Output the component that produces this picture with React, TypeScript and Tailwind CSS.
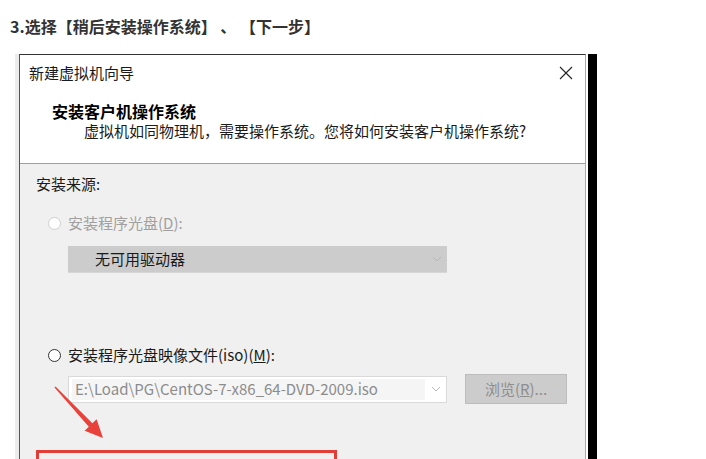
import React from 'react';

const font = { fontFamily: '"Noto Sans CJK SC", "Noto Sans", sans-serif' };

const Chevron = () => (
  <svg width="10" height="6" viewBox="0 0 10 6" className="shrink-0">
    <path d="M1 1 L5 5 L9 1" fill="none" stroke="#b8b8b8" strokeWidth="1" />
  </svg>
);

const Radio = ({ disabled }: { disabled?: boolean }) => (
  <span
    className={
      'w-[13px] h-[13px] rounded-full border bg-white shrink-0 ' +
      (disabled ? 'border-[#cfcfcf]' : 'border-[#333333]')
    }
  />
);

export default function App() {
  return (
    <div className="w-[706px] h-[459px] overflow-hidden bg-white relative" style={font}>
      <h2 className="pt-[15px] pl-[10px] text-[16px] leading-[22px] font-bold text-[#333333] whitespace-pre">
        3.选择【稍后安装操作系统】 、 【下一步】
      </h2>

      <div className="flex mt-[17px] ml-[15px]">
        <div className="w-[4px] bg-[#ececec]" />
        {/* dialog */}
        <div className="w-[567px] h-[420px] border-l border-t border-r border-l-[#555555] border-t-[#333333] border-r-[#a8a8a8]">
          <div className="bg-white border-b border-[#a0a0a0]">
            <div className="h-[36px] flex items-center justify-between pl-[9px] pr-[12px]">
              <span className="text-[15px] text-[#1a1a1a]">新建虚拟机向导</span>
              <svg width="14" height="14" viewBox="0 0 14 14">
                <path d="M1 1 L13 13 M13 1 L1 13" stroke="#222222" strokeWidth="1.1" />
              </svg>
            </div>
            <div className="mt-[10px] pl-[32px] text-[16px] leading-[20px] font-bold text-black">
              安装客户机操作系统
            </div>
            <div className="pl-[64px] pb-[22px] text-[15px] leading-[20px] text-[#1a1a1a]">
              虚拟机如同物理机，需要操作系统。您将如何安装客户机操作系统?
            </div>
          </div>

          <div className="bg-[#f0f0f0] h-full pl-[16px]">
            <div className="pt-[10px] text-[15px] leading-[20px] text-[#1a1a1a]">安装来源:</div>

            <div className="mt-[19px] ml-[12px] flex items-center gap-[7px] h-[20px]">
              <Radio disabled />
              <span className="text-[15px] text-[#a0a0a0]">
                安装程序光盘(<span className="underline">D</span>):
              </span>
            </div>

            <div className="mt-[13px] ml-[32px] w-[379px] h-[27px] bg-[#cccccc] border-b border-[#d6d6d6] flex items-center justify-between pl-[27px] pr-[5px]">
              <span className="text-[15px] text-[#1a1a1a]">无可用驱动器</span>
              <Chevron />
            </div>

            <div className="mt-[72px] ml-[12px] flex items-center gap-[7px] h-[20px]">
              <Radio />
              <span className="text-[15px] text-[#1a1a1a]">
                安装程序光盘映像文件(iso)(<span className="underline">M</span>):
              </span>
            </div>

            <div className="mt-[9px] ml-[32px] flex items-center gap-[18px]">
              <div className="w-[379px] h-[27px] bg-white border border-[#d9d9d9] flex items-center justify-between pl-[3px] pr-[5px]">
                <div className="w-[353px] h-[21px] bg-[#f5f5f5] flex items-center pl-[3px]">
                  <span className="text-[15px] text-[#8c8c8c] whitespace-nowrap">
                    E:\Load\PG\CentOS-7-x86_64-DVD-2009.iso
                  </span>
                </div>
                <Chevron />
              </div>
              <div className="w-[102px] h-[30px] bg-[#cccccc] border border-[#bdbdbd] flex items-center justify-center text-[15px] text-[#8e8e8e]">
                浏览(<span className="underline">R</span>)...
              </div>
            </div>

            <div className="mt-[46px] w-[301px] h-[40px] border-[3px] border-[#e23d36]" />
          </div>
        </div>
        <div className="ml-[2px] w-[9px] h-[420px] bg-black" />
      </div>

      <svg className="absolute left-0 top-0 pointer-events-none" width="706" height="459">
        <polygon
          points="54.5,387.5 55.5,386.5 92.4,423.3 96.6,419.3 103,438 84.6,430.7 88.8,426.7"
          fill="#e8423b"
        />
      </svg>
    </div>
  );
}
